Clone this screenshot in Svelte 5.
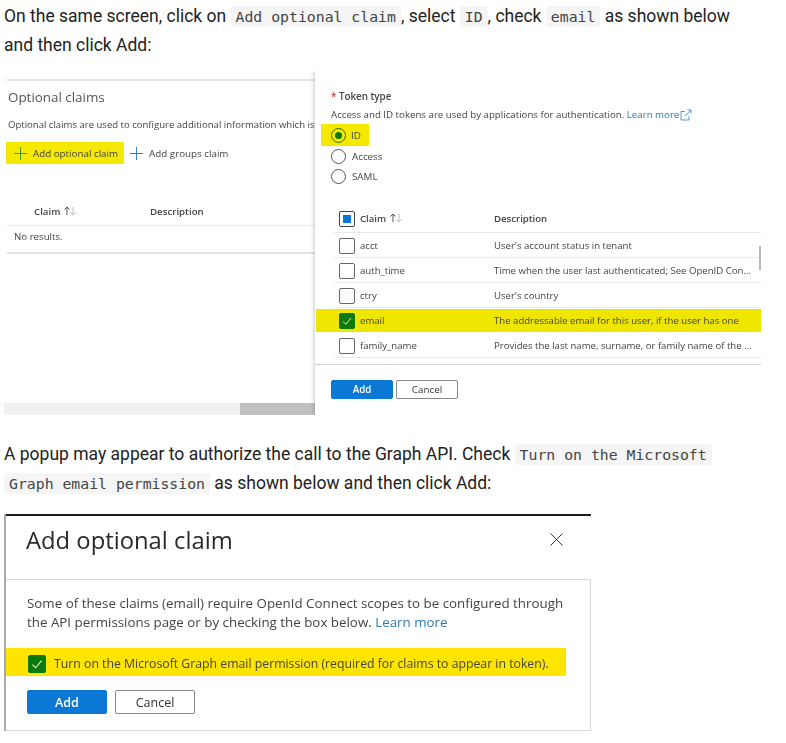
<script lang="ts">
	const rows = [
		{ name: "acct", desc: "User's account status in tenant" },
		{ name: "auth_time", desc: "Time when the user last authenticated; See OpenID Con..." },
		{ name: "ctry", desc: "User's country" },
		{ name: "email", desc: "The addressable email for this user, if the user has one", on: true },
		{ name: "family_name", desc: "Provides the last name, surname, or family name of the ..." },
	];
	const radios = ["ID", "Access", "SAML"];
</script>

{#snippet sortIcon()}
	<svg class="sort" width="16" height="10" viewBox="0 0 16 10">
		<path d="M4 9V1M1.500 3.500L4 1l2.500 2.500" fill="none" stroke="#555" />
		<path d="M10 1v8M7.500 6.500L10 9l2.500-2.500" fill="none" stroke="#bbb" />
	</svg>
{/snippet}

{#snippet plus(color)}
	<svg width="13" height="13" viewBox="0 0 13 13">
		<path d="M6.500 0v13M0 6.500h13" stroke={color} fill="none" />
	</svg>
{/snippet}

{#snippet tick(size)}
	<svg width={size} height={size} viewBox="0 0 14 14">
		<path d="M3 7.500l2.800 2.800L11 4" stroke="#d8efc8" fill="none" />
	</svg>
{/snippet}

<main class="page">
	<p class="para first">
		On the same screen, click on <code>Add optional claim</code>, select <code>ID</code>, check
		<code>email</code> as shown below and then click Add:
	</p>

	<div class="shot-one">
		<section class="left-pane">
			<h3>Optional claims</h3>
			<div class="left-desc">Optional claims are used to configure additional information which is</div>
			<div class="left-actions">
				<span class="action marked">{@render plus("#3f9a2d")}Add optional claim</span>
				<span class="action plain">{@render plus("#2f7fc4")}Add groups claim</span>
			</div>
			<div class="left-head">
				<span class="col-claim">Claim {@render sortIcon()}</span>
				<span>Description</span>
			</div>
			<div class="no-results">No results.</div>
			<div class="left-space"></div>
			<div class="hscroll"><div class="hthumb"></div></div>
		</section>

		<section class="panel">
			<div class="token-label"><span class="req">*</span> Token type</div>
			<div class="token-desc">
				Access and ID tokens are used by applications for authentication.
				<span class="link">Learn more</span>
				<svg class="ext" width="12" height="12" viewBox="0 0 12 12">
					<path d="M5 2.500H1v8.500h8V7M5 7l6-6M7.500 1H11v3.500" fill="none" stroke="#2f7fc4" stroke-width="0.8" />
				</svg>
			</div>
			<div class="radios">
				{#each radios as r, i}
					<div class="radio-row" class:marked={i === 0}>
						<span class="radio" class:sel={i === 0}></span>{r}
					</div>
				{/each}
			</div>
			<div class="table-head">
				<span class="box head-box"><span class="dot"></span></span>
				<span class="name-col">Claim {@render sortIcon()}</span>
				<span>Description</span>
			</div>
			<div class="table-body">
				{#each rows as row}
					<div class="row" class:row-on={row.on}>
						<span class="box" class:checked={row.on}>{#if row.on}{@render tick(14)}{/if}</span>
						<span class="name-col">{row.name}</span>
						<span>{row.desc}</span>
					</div>
				{/each}
				<div class="cut-box"></div>
				<div class="vthumb"></div>
			</div>
			<div class="panel-foot">
				<button class="btn primary small">Add</button>
				<button class="btn small">Cancel</button>
			</div>
		</section>
	</div>

	<p class="para second">
		A popup may appear to authorize the call to the Graph API. Check <code>Turn on the Microsoft
		Graph email permission</code> as shown below and then click Add:
	</p>

	<div class="shot-two">
		<header class="dlg-head">
			<h2>Add optional claim</h2>
			<svg width="13" height="13" viewBox="0 0 13 13">
				<path d="M.5.500l12 12M12.500.500l-12 12" stroke="#333" fill="none" />
			</svg>
		</header>
		<div class="dlg-body">
			<p class="dlg-text">
				Some of these claims (email) require OpenId Connect scopes to be configured through
				the API permissions page or by checking the box below. <span class="link">Learn more</span>
			</p>
			<div class="dlg-check">
				<span class="box big checked">{@render tick(16)}</span>
				Turn on the Microsoft Graph email permission (required for claims to appear in token).
			</div>
			<div class="dlg-foot">
				<button class="btn primary large">Add</button>
				<button class="btn large">Cancel</button>
			</div>
		</div>
	</div>
</main>

<style>
	:global(body) {
		background: #fff;
	}

	.page {
		width: 786px;
		height: 743px;
		overflow: hidden;
		font-family: Roboto, sans-serif;
		color: #222;
	}

	.para {
		margin: 0;
		padding-left: 4px;
		font-size: 17.500px;
		line-height: 28px;
		width: 740px;
	}

	.first {
		padding-top: 2px;
	}

	code {
		font-family: "DejaVu Sans Mono", monospace;
		font-size: 14.800px;
		background: #f5f5f5;
		color: #444;
		padding: 2px 5px;
		border-radius: 3px;
		-webkit-box-decoration-break: clone;
		box-decoration-break: clone;
	}

	/* the pasted screenshots are soft in the original */
	.shot-one {
		display: flex;
		margin: 12px 0 0 4px;
		width: 757px;
		height: 344px;
		overflow: hidden;
		font-family: "Open Sans", sans-serif;
		color: #444;
		filter: blur(0.3px);
	}

	.left-pane {
		width: 311px;
		display: flex;
		flex-direction: column;
		padding-top: 8px;
		box-sizing: border-box;
	}

	.left-pane > * {
		margin-left: 3px;
	}

	h3 {
		margin: 0;
		font-size: 13.400px;
		font-weight: 400;
		color: #555;
		border-top: 2px solid #e4e4e4;
		padding-top: 6px;
		padding-left: 1px;
		line-height: 20px;
	}

	.left-desc {
		font-size: 9.550px;
		margin-top: 11px;
		padding-left: 1px;
		line-height: 14px;
		white-space: nowrap;
	}

	.left-actions {
		display: flex;
		align-items: center;
		margin-top: 10px;
		font-size: 9.800px;
	}

	.action {
		display: flex;
		align-items: center;
		gap: 6px;
		height: 22px;
		padding: 0 6px 0 8px;
		margin-left: -1px;
	}

	.action.plain {
		padding-left: 7px;
	}

	.marked {
		background: #f5e900;
	}

	.left-head {
		display: flex;
		margin-top: 34px;
		font-size: 9.700px;
		font-weight: 600;
		height: 28px;
		align-items: center;
		border-bottom: 1px solid #e8e8e8;
		box-sizing: border-box;
	}

	.col-claim {
		width: 116px;
		padding-left: 27px;
		box-sizing: content-box;
	}

	.sort {
		vertical-align: -1px;
	}

	.no-results {
		font-size: 9.700px;
		padding: 4px 0 0 7px;
		height: 22px;
		border-bottom: 2px solid #e2e2e2;
	}

	.left-space {
		flex: 1;
	}

	.hscroll {
		margin-left: 0 !important;
		height: 12px;
		background: #f1f1f1;
		display: flex;
		justify-content: flex-end;
	}

	.hthumb {
		width: 75px;
		background: #c1c1c1;
	}

	.panel {
		width: 446px;
		position: relative;
		padding-top: 19px;
		background: #fff;
		box-shadow: -2px 0 3px rgba(0, 0, 0, 0.14);
		box-sizing: border-box;
	}

	.token-label {
		padding-left: 16px;
		font-size: 9.800px;
		font-weight: 600;
		line-height: 14px;
	}

	.req {
		color: #d33;
	}

	.token-desc {
		padding-left: 16px;
		font-size: 9.700px;
		line-height: 14px;
		margin-top: 4px;
		white-space: nowrap;
	}

	.link {
		color: #2b79b5;
	}

	.ext {
		vertical-align: -3px;
		margin-left: -2px;
	}

	.radios {
		display: flex;
		flex-direction: column;
		margin-top: 2px;
		font-size: 9.800px;
	}

	.radio-row {
		display: flex;
		align-items: center;
		gap: 6px;
		height: 20.500px;
		padding-left: 16px;
		width: fit-content;
	}

	.radio-row.marked {
		height: 22px;
		gap: 5px;
		padding: 0 10px 0 10px;
		margin-left: 6px;
		width: 28px;
	}

	.radio {
		width: 13px;
		height: 13px;
		border: 1px solid #555;
		border-radius: 50%;
		flex: none;
		display: flex;
		align-items: center;
		justify-content: center;
	}

	.radio.sel {
		border-color: #3a6b10;
	}

	.radio.sel::after {
		content: "";
		width: 7px;
		height: 7px;
		border-radius: 50%;
		background: #0a7a0a;
	}

	.table-head,
	.row {
		display: flex;
		align-items: center;
		font-size: 9.600px;
		padding-left: 24px;
	}

	.table-head {
		margin-top: 17px;
		height: 29px;
		font-weight: 600;
		position: relative;
	}

	.table-head::after {
		content: "";
		position: absolute;
		left: 19px;
		right: 0;
		bottom: 0;
		border-bottom: 1px solid #e8e8e8;
	}

	.table-body {
		position: relative;
		height: 131px;
		overflow: hidden;
		border-bottom: 1px solid #cfcfcf;
	}

	.row {
		height: 25px;
		position: relative;
	}

	.row::after {
		content: "";
		position: absolute;
		left: 19px;
		right: 0;
		bottom: 0;
		border-bottom: 1px solid #eaeaea;
	}

	.row-on {
		background: #efe600;
		margin-left: 1px;
		padding-left: 23px;
		height: 23px;
		margin-top: 1px;
		margin-bottom: 1px;
	}

	.row-on::after {
		display: none;
	}

	.name-col {
		padding-left: 5px;
		box-sizing: border-box;
		flex: none;
		width: 139px;
	}

	.box {
		width: 14px;
		height: 14px;
		border: 1px solid #666;
		border-radius: 2px;
		flex: none;
		display: flex;
		align-items: center;
		justify-content: center;
		background: #fff;
	}

	.box.checked {
		background: #0b7a0b;
		border-color: #0b7a0b;
	}

	.box.big {
		width: 16px;
		height: 16px;
	}

	.head-box {
		border-color: #444;
	}

	.dot {
		width: 8px;
		height: 8px;
		background: #0a78d4;
	}

	.cut-box {
		width: 14px;
		height: 8px;
		margin-left: 24px;
		background: #888;
		margin-top: 6px;
	}

	.vthumb {
		position: absolute;
		right: 0;
		top: 13px;
		width: 2px;
		height: 24px;
		background: #bbb;
	}

	.panel-foot {
		display: flex;
		gap: 3px;
		padding: 15px 0 0 16px;
	}

	.btn {
		font-family: "Open Sans", sans-serif;
		border: 1px solid #8a8886;
		background: #fff;
		color: #333;
		border-radius: 2px;
		padding: 0;
	}

	.primary {
		background: #0a78d4;
		border-color: #0a78d4;
		color: #fff;
		font-weight: 600;
	}

	.small {
		width: 62px;
		height: 19px;
		font-size: 9.800px;
	}

	.second {
		margin-top: 25px;
	}

	.shot-two {
		margin: 16px 0 0 4px;
		width: 587px;
		height: 217px;
		border-left: 2px solid #aaa;
		box-sizing: border-box;
		font-family: "Open Sans", sans-serif;
		filter: blur(0.2px);
	}

	.shot-two::before {
		content: "";
		display: block;
		height: 2px;
		background: #1b1b1b;
	}

	.dlg-head {
		display: flex;
		justify-content: space-between;
		align-items: center;
		height: 63px;
		padding: 0 28px 16px 20px;
		box-sizing: border-box;
	}

	h2 {
		margin: 0;
		font-size: 23.800px;
		font-weight: 400;
		color: #2a2a2a;
	}

	.dlg-body {
		border: 1px solid #d8d8d8;
		border-left: none;
		height: 152px;
		box-sizing: border-box;
		color: #444;
	}

	.dlg-text {
		margin: 0;
		padding: 14px 0 0 21px;
		font-size: 13.350px;
		line-height: 19px;
		width: 555px;
	}

	.dlg-check {
		display: flex;
		align-items: center;
		gap: 8px;
		margin-top: 16px;
		height: 28px;
		width: 560px;
		padding: 3px 0 0 22px;
		box-sizing: border-box;
		background: #fde500;
		font-size: 12.270px;
		white-space: nowrap;
	}

	.dlg-foot {
		display: flex;
		gap: 8px;
		padding: 14px 0 0 21px;
	}

	.large {
		width: 80px;
		height: 24px;
		font-size: 12.500px;
	}
</style>
